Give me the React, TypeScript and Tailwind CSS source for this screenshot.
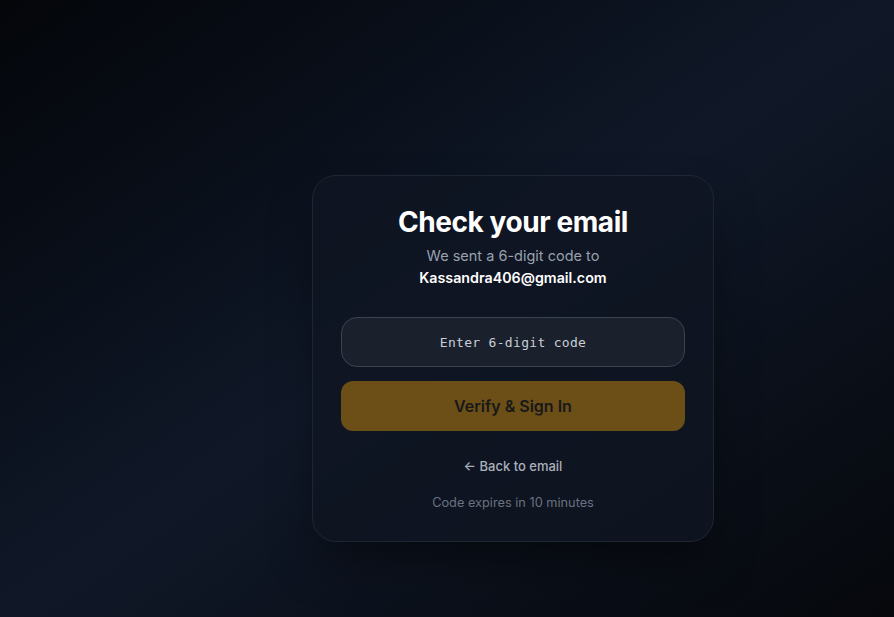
import { useState } from "react";

export default function App() {
  const [code, setCode] = useState("");

  return (
    <div
      className="min-h-screen w-full bg-gradient-to-br from-[#04060a] via-[#101828] to-[#06080c] flex justify-center items-start pl-[132px] pt-[175px]"
      style={{ fontFamily: "Inter, 'Noto Sans', sans-serif" }}
    >
      <div className="w-[402px] rounded-3xl border border-[#1f2633] bg-[#0f1522]/80 shadow-2xl shadow-black/50 px-7 pt-7 pb-[29px]">
        <div className="text-center">
          <h1 className="text-[28px] leading-9 font-bold text-white tracking-[-0.015em]">Check your email</h1>
          <p className="mt-[5px] text-[14.5px] leading-[22px] text-gray-400">We sent a 6-digit code to</p>
          <p className="text-[14.25px] leading-[22px] font-semibold text-white">Kassandra406@gmail.com</p>
        </div>

        <div className="mt-7">
          <input
            value={code}
            onChange={(e) => setCode(e.target.value)}
            placeholder="Enter 6-digit code"
            className="w-full h-[50px] rounded-2xl border border-[#3a4351] bg-[#1a212d] text-center text-[13px] tracking-[0.3px] text-gray-200 placeholder:text-[#c9ced6] outline-none"
            style={{ fontFamily: "'DejaVu Sans Mono', 'Liberation Mono', monospace" }}
          />
          <button className="mt-[14px] w-full h-[50px] rounded-xl bg-[#6b4f16] text-base font-semibold text-[#18181b]">
            Verify &amp; Sign In
          </button>
        </div>

        <div className="mt-[22px] text-center">
          <button className="text-[13px] font-medium text-[#aab0ba]">← Back to email</button>
          <p className="mt-4 text-[12.75px] text-gray-500">Code expires in 10 minutes</p>
        </div>
      </div>
    </div>
  );
}
